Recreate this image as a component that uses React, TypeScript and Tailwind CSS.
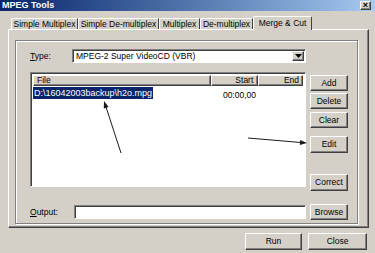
import React from "react";

const raised =
  "flex items-center justify-center bg-[#d4d0c8] border border-t-white border-l-white border-r-[#404040] border-b-[#404040] shadow-[inset_-1px_-1px_0_#808080]";
const sunken =
  "bg-white border border-t-[#808080] border-l-[#808080] border-r-white border-b-white shadow-[inset_1px_1px_0_#404040]";

function Btn({ label, w = "w-[38px]", h = "h-[16px]", mt = "" }: { label: string; w?: string; h?: string; mt?: string }) {
  return <div className={`${raised} ${w} ${h} ${mt}`}>{label}</div>;
}

const tabs = [
  { label: "Simple Multiplex", w: "w-[67px]" },
  { label: "Simple De-multiplex", w: "w-[81px]" },
  { label: "Multiplex", w: "w-[41px]" },
  { label: "De-multiplex", w: "w-[53px]" },
];

export default function App() {
  return (
    <div className="relative w-[375px] h-[253px] overflow-hidden bg-[#d4d0c8] text-black text-[8.5px] leading-none font-['Liberation_Sans',Arial,sans-serif]">
      {/* title bar */}
      <div className="h-[11px] flex items-center justify-between pl-[2px] pr-[4px] bg-gradient-to-r from-[#0a246a] to-[#a6caf0]">
        <span className="text-white font-bold text-[9px]">MPEG Tools</span>
        <div className={`${raised} w-[11px] h-[9px] text-[9px] font-bold`}>×</div>
      </div>

      {/* tabs */}
      <div className="h-[18px] flex items-end pl-[11px]">
        {tabs.map((t) => (
          <div
            key={t.label}
            className={`${t.w} h-[11px] flex items-center justify-center border-t border-l border-t-white border-l-white border-r border-r-[#404040] rounded-tl-[2px]`}
          >
            {t.label}
          </div>
        ))}
        <div className="relative z-10 -mb-[1px] w-[59px] h-[14px] flex items-center justify-center bg-[#d4d0c8] border-t border-l border-r border-t-white border-l-white border-r-[#404040] rounded-t-[2px]">
          Merge &amp; Cut
        </div>
      </div>

      {/* tab page */}
      <div className="ml-[8px] w-[361px] h-[199px] border border-t-white border-l-white border-r-[#404040] border-b-[#404040] shadow-[inset_-1px_-1px_0_#808080] pt-[10px] pl-[6px]">
        {/* group */}
        <div className="w-[343px] h-[184px] border border-[#808080] shadow-[inset_1px_1px_0_#fff,1px_1px_0_#fff] pl-[14px] pt-[8px]">
          <div className="flex items-center h-[14px]">
            <span className="w-[42px]">
              <span className="underline">T</span>ype:
            </span>
            <div className={`${sunken} w-[234px] h-[14px] flex items-center justify-between pl-[3px] pr-[1px]`}>
              <span className="text-[8.5px]">MPEG-2 Super VideoCD (VBR)</span>
              <div className={`${raised} w-[12px] h-[10px]`}>
                <svg width="7" height="4" viewBox="0 0 7 4">
                  <path d="M0 0h7L3.5 4z" fill="#000" />
                </svg>
              </div>
            </div>
          </div>

          <div className="flex mt-[9px]">
            <div className={`${sunken} w-[276px] h-[115px] p-[2px]`}>
              <div className="flex h-[11px]">
                <div className={`${raised} !justify-start pl-[3px] w-[179px] h-[11px]`}>File</div>
                <div className={`${raised} !justify-end pr-[4px] w-[48px] h-[11px]`}>Start</div>
                <div className={`${raised} !justify-end pr-[3px] w-[45px] h-[11px]`}>End</div>
              </div>
              <div className="flex items-center h-[11px] mt-[2px]">
                <div className="w-[179px]">
                  <span className="bg-[#0a246a] text-white text-[9px] px-[1px] py-[1px]">D:\16042003backup\h2o.mpg</span>
                </div>
                <div className="w-[48px] text-right pr-[4px] pt-[4px]">00:00,00</div>
              </div>
            </div>
            <div className="ml-[4px] flex flex-col">
              <Btn label="Add" mt="mt-[3px]" />
              <Btn label="Delete" mt="mt-[2px]" />
              <Btn label="Clear" mt="mt-[3px]" />
              <Btn label="Edit" h="h-[17px]" mt="mt-[8px]" />
              <Btn label="Correct" h="h-[17px]" mt="mt-[21px]" />
            </div>
          </div>

          <div className="flex items-center mt-[13px] h-[16px]">
            <span className="w-[44px]">
              <span className="underline">O</span>utput:
            </span>
            <div className={`${sunken} w-[232px] h-[14px]`} />
            <div className="ml-[4px]">
              <Btn label="Browse" />
            </div>
          </div>
        </div>
      </div>

      {/* dialog buttons */}
      <div className="flex justify-end gap-[6px] pr-[8px] mt-[5px]">
        <Btn label="Run" w="w-[57px]" h="h-[17px]" />
        <Btn label="Close" w="w-[59px]" h="h-[17px]" />
      </div>

      {/* annotation arrows */}
      <svg className="absolute inset-0 pointer-events-none" width="375" height="253" viewBox="0 0 375 253">
        <line x1="121" y1="153" x2="106" y2="107" stroke="#1a1a1a" strokeWidth="1" />
        <path d="M104 101 L108.6 106.9 L103.8 108.5 Z" fill="#1a1a1a" />
        <line x1="248" y1="138" x2="301" y2="142.5" stroke="#1a1a1a" strokeWidth="1" />
        <path d="M307 143 L299.8 144.9 L300.2 139.9 Z" fill="#1a1a1a" />
      </svg>
    </div>
  );
}
